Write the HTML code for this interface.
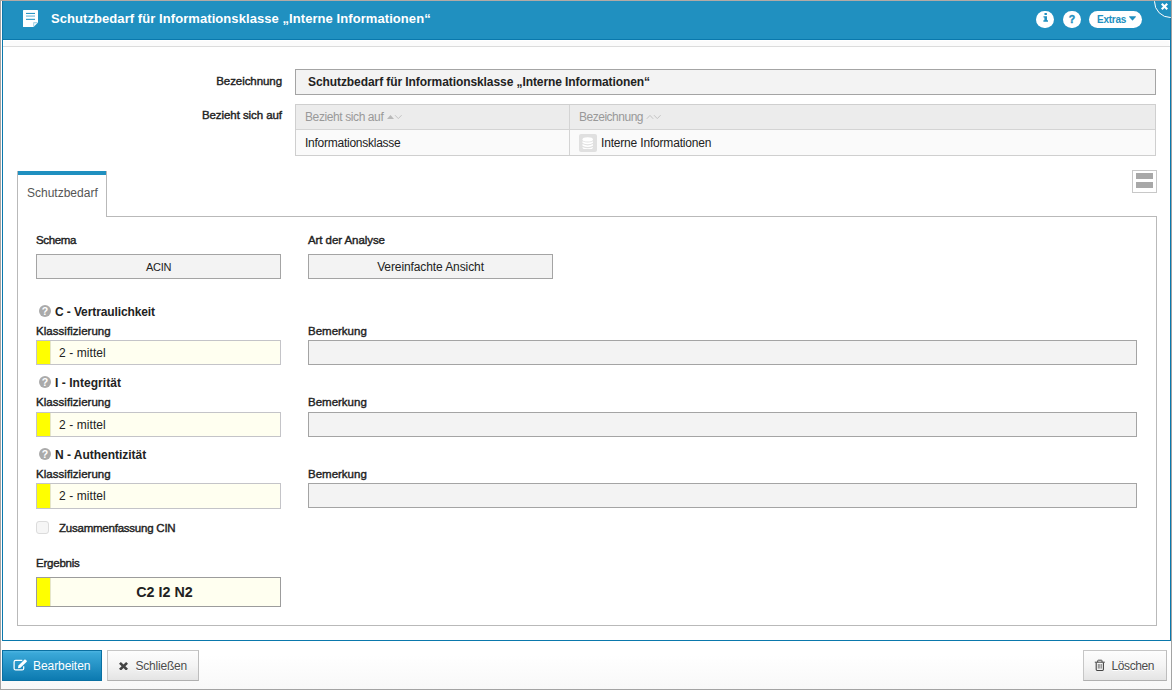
<!DOCTYPE html>
<html lang="de">
<head>
<meta charset="utf-8">
<title>Schutzbedarf</title>
<style>
*{box-sizing:border-box;margin:0;padding:0}
html,body{width:1172px;height:690px;overflow:hidden;background:#fff}
body{position:relative;font-family:"Liberation Sans",sans-serif;font-size:12px;color:#222;line-height:16px}
.abs{position:absolute}
.t{position:absolute;white-space:nowrap;line-height:16px;height:16px}
.sb{font-weight:normal;font-size:11.5px;-webkit-text-stroke:0.4px #222;letter-spacing:-0.07px}
.b{font-weight:bold}
#frame{left:0;top:0;width:1172px;height:690px;border:1px solid #a3a3a3;border-top-color:#b3aaa5}
#dlg{left:2px;top:1px;width:1169px;height:640px;border:1px solid #0a78ac;border-top:none;background:#fff}
#hdr{left:3px;top:1px;width:1167px;height:38px;background:#2090c0}
#hdrline{left:3px;top:39px;width:1167px;height:1px;background:#0a78ac}
#band{left:4px;top:41px;width:1165px;height:5px;background:#fbfbfb}
#bandline{left:3px;top:46px;width:1167px;height:1px;background:#dcdcdc}
#foot{left:1px;top:641px;width:1170px;height:48px;background:linear-gradient(#fff,#fff 30%,#f8f8f8)}
.inp{position:absolute;border:1px solid #a4a4a4;background:#f3f3f3}
.cls{position:absolute;border:1px solid #c4c4c8;background:#fffff0}
.cls i{position:absolute;left:0;top:0;bottom:0;width:13px;background:#ffff00;border-right:1px solid #e6e6c8;box-sizing:content-box}
.btn{position:absolute;top:650px;height:31px;border:1px solid #bdbdbd;border-top-color:#c6c6c6;border-left-color:#c6c6c6;border-bottom-color:#b0b0b0;background:linear-gradient(#fdfdfd,#f4f4f4 50%,#e4e4e4);color:#555}
.q{width:12px;height:12px;border-radius:6px;background:#aaa}
.q svg{position:absolute;left:0;top:0}
</style>
</head>
<body>
<div id="frame" class="abs"></div>
<div id="dlg" class="abs"></div>
<div id="hdr" class="abs"></div>
<div id="hdrline" class="abs"></div>
<div id="band" class="abs"></div>
<div id="bandline" class="abs"></div>
<div id="foot" class="abs"></div>

<!-- header -->
<svg class="abs" style="left:23px;top:10px" width="15" height="17" viewBox="0 0 15 17">
<path d="M0.5 0H14.5Q15 0 15 .5V12.5L10.5 17H.5Q0 17 0 16.5V.5Q0 0 .5 0Z" fill="#fff"/>
<path d="M10.3 12.3H15L10.3 17Z" fill="#8fc7e0"/>
<path d="M11.2 13.2H14L11.2 16Z" fill="#fff"/>
<rect x="3" y="2.9" width="9" height="1.1" fill="#2d97c5"/>
<rect x="3" y="5.5" width="9" height="1.1" fill="#6ab5d8"/>
<rect x="3" y="8.8" width="9" height="1.1" fill="#2d97c5"/>
</svg>
<div class="t b" style="left:51px;top:11px;font-size:13px;color:#fff;letter-spacing:0.07px">Schutzbedarf für Informationsklasse „Interne Informationen“</div>

<div class="abs" style="left:1036px;top:10.6px;width:18px;height:17.4px;border-radius:9px;background:#fff"></div>
<svg class="abs" style="left:1042.8px;top:13px" width="5.4" height="9.4" viewBox="0 0 6 11"><path d="M1.6 0H4.4V2.4H1.6ZM.4 3.8H4.5V8.6H5.7V10.2H.3V8.6H1.5V5.4H.4Z" fill="#2090c0"/></svg>
<div class="abs" style="left:1063px;top:10.6px;width:18px;height:17.4px;border-radius:9px;background:#fff"></div>
<div class="t b" style="left:1063px;top:10.5px;width:18px;text-align:center;font-size:10.5px;color:#2090c0;-webkit-text-stroke:0.4px #2090c0">?</div>
<div class="abs" style="left:1089px;top:10.6px;width:53px;height:17.4px;border-radius:9px;background:#fff"></div>
<div class="t b" style="left:1097px;top:12px;font-size:10px;color:#2090c0;letter-spacing:-0.25px">Extras</div>
<svg class="abs" style="left:1129px;top:16px" width="7" height="5" viewBox="0 0 7 5"><path d="M.4 .3H6.6Q7.1 .5 6.8 1L3.9 4.3Q3.5 4.7 3.1 4.3L.2 1Q-.1 .5 .4 .3Z" fill="#2090c0"/></svg>

<div class="abs" style="left:1150px;top:1px;width:21px;height:22px;overflow:hidden"><div class="abs" style="left:4px;top:-16px;width:33px;height:33px;border-radius:50%;border:1.5px solid #fff;background:#2090c0"></div></div>
<svg class="abs" style="left:1161px;top:3px" width="7" height="7" viewBox="0 0 7 7"><path d="M1.5 0L3.5 2L5.5 0L7 1.5L5 3.5L7 5.5L5.5 7L3.5 5L1.5 7L0 5.5L2 3.5L0 1.5Z" fill="#fff"/></svg>

<!-- top form -->
<div class="t sb" style="left:182px;top:73px;width:100px;text-align:right">Bezeichnung</div>
<div class="inp" style="left:295px;top:69px;width:861px;height:26px"></div>
<div class="t b" style="left:308px;top:74px;letter-spacing:-0.08px">Schutzbedarf für Informationsklasse „Interne Informationen“</div>
<div class="t sb" style="left:182px;top:107px;width:100px;text-align:right">Bezieht sich auf</div>

<div class="abs" style="left:295px;top:104px;width:861px;height:52px;border:1px solid #cfcfcf;background:#fafafa"></div>
<div class="abs" style="left:296px;top:105px;width:859px;height:24px;background:#ececec"></div>
<div class="abs" style="left:296px;top:129px;width:859px;height:1px;background:#d4d4d4"></div>
<div class="abs" style="left:569px;top:105px;width:1px;height:50px;background:#d4d4d4"></div>
<div class="t" style="left:305px;top:109px;color:#999;letter-spacing:-0.4px">Bezieht sich auf</div>
<svg class="abs" style="left:387px;top:114px" width="16" height="6" viewBox="0 0 16 6"><path d="M0 5L3.5 1L7 5Z" fill="#b9b9b9"/><path d="M8 1.2L11.3 4.6L14.6 1.2" fill="none" stroke="#c4c4c4" stroke-width="1"/></svg>
<div class="t" style="left:579px;top:109px;color:#999;letter-spacing:-0.49px">Bezeichnung</div>
<svg class="abs" style="left:646px;top:114px" width="16" height="6" viewBox="0 0 16 6"><path d="M.8 4.8L4 1.4L7.2 4.8" fill="none" stroke="#c4c4c4" stroke-width="1"/><path d="M8 1.2L11.3 4.6L14.6 1.2" fill="none" stroke="#c4c4c4" stroke-width="1"/></svg>
<div class="t" style="left:305px;top:135px;letter-spacing:-0.25px">Informationsklasse</div>
<div class="abs" style="left:579px;top:134px;width:18px;height:18px;border-radius:2px;background:#e0e0e0"></div>
<svg class="abs" style="left:582.2px;top:136.6px" width="11.4" height="12.6" viewBox="0 0 12 14" preserveAspectRatio="none"><g fill="#fff"><ellipse cx="6" cy="2.7" rx="5.5" ry="2.3"/><path d="M.5 4.7Q6 7.6 11.5 4.7V6.6Q6 9.5 .5 6.6Z"/><path d="M.5 7.9Q6 10.8 11.5 7.9V9.8Q6 12.7 .5 9.8Z"/><path d="M.5 11.1Q6 14 11.5 11.1V11.7Q11.5 14 6 14Q.5 14 .5 11.7Z"/></g></svg>
<div class="t" style="left:601px;top:135px;letter-spacing:-0.18px">Interne Informationen</div>

<!-- tab -->
<div class="abs" style="left:17px;top:216px;width:1140px;height:410px;border:1px solid #b9b9b9;background:#fff"></div>
<div class="abs" style="left:17px;top:171px;width:90px;height:46px;border:1px solid #b9b9b9;border-bottom:none;border-top:none;background:#fff"><div style="height:4px;background:#2090c0"></div></div>
<div class="t" style="left:27px;top:185px;color:#555">Schutzbedarf</div>
<div class="abs" style="left:1132px;top:170px;width:25px;height:23px;border:1px solid #c8c8c8;background:#fff"></div>
<div class="abs" style="left:1136px;top:173px;width:17px;height:6px;background:#a8a8a8"></div>
<div class="abs" style="left:1136px;top:182px;width:17px;height:6px;background:#a8a8a8"></div>

<!-- panel content -->
<div class="t sb" style="left:36px;top:232px;letter-spacing:-0.37px">Schema</div>
<div class="inp" style="left:36px;top:254px;width:245px;height:25px"></div>
<div class="t" style="left:36px;top:259px;width:245px;text-align:center;font-size:11px;letter-spacing:-0.3px">ACIN</div>
<div class="t sb" style="left:308px;top:232px">Art der Analyse</div>
<div class="inp" style="left:308px;top:254px;width:245px;height:25px"></div>
<div class="t" style="left:308px;top:259px;width:245px;text-align:center;letter-spacing:-0.1px">Vereinfachte Ansicht</div>

<!-- C -->
<div class="abs q" style="left:39px;top:305px"><svg width="12" height="12" viewBox="0 0 12 12"><text x="6" y="9.7" text-anchor="middle" font-family="Liberation Sans, sans-serif" font-weight="bold" font-size="10.5" fill="#fff">?</text></svg></div>
<div class="t b" style="left:55px;top:304px;letter-spacing:-0.11px">C - Vertraulichkeit</div>
<div class="t sb" style="left:36px;top:323px;letter-spacing:0.04px">Klassifizierung</div>
<div class="cls" style="left:36px;top:340px;width:245px;height:25px"><i></i></div>
<div class="t" style="left:59px;top:345px;letter-spacing:0.08px">2 - mittel</div>
<div class="t sb" style="left:308px;top:323px;letter-spacing:0px">Bemerkung</div>
<div class="inp" style="left:308px;top:340px;width:829px;height:25px"></div>

<!-- I -->
<div class="abs q" style="left:39px;top:376px"><svg width="12" height="12" viewBox="0 0 12 12"><text x="6" y="9.7" text-anchor="middle" font-family="Liberation Sans, sans-serif" font-weight="bold" font-size="10.5" fill="#fff">?</text></svg></div>
<div class="t b" style="left:55px;top:375px;letter-spacing:0.05px">I - Integrität</div>
<div class="t sb" style="left:36px;top:394px;letter-spacing:0.04px">Klassifizierung</div>
<div class="cls" style="left:36px;top:412px;width:245px;height:25px"><i></i></div>
<div class="t" style="left:59px;top:417px;letter-spacing:0.08px">2 - mittel</div>
<div class="t sb" style="left:308px;top:394px;letter-spacing:0px">Bemerkung</div>
<div class="inp" style="left:308px;top:412px;width:829px;height:25px"></div>

<!-- N -->
<div class="abs q" style="left:39px;top:448px"><svg width="12" height="12" viewBox="0 0 12 12"><text x="6" y="9.7" text-anchor="middle" font-family="Liberation Sans, sans-serif" font-weight="bold" font-size="10.5" fill="#fff">?</text></svg></div>
<div class="t b" style="left:55px;top:447px;letter-spacing:-0.02px">N - Authentizität</div>
<div class="t sb" style="left:36px;top:466px;letter-spacing:0.04px">Klassifizierung</div>
<div class="cls" style="left:36px;top:483px;width:245px;height:26px"><i></i></div>
<div class="t" style="left:59px;top:488px;letter-spacing:0.08px">2 - mittel</div>
<div class="t sb" style="left:308px;top:466px;letter-spacing:0px">Bemerkung</div>
<div class="inp" style="left:308px;top:483px;width:829px;height:25px"></div>

<div class="abs" style="left:36px;top:521px;width:13px;height:13px;border:1px solid #dcdcdc;border-radius:3px;background:#f6f6f6"></div>
<div class="t sb" style="left:59px;top:520px;letter-spacing:-0.23px">Zusammenfassung CIN</div>
<div class="t sb" style="left:36px;top:555px;letter-spacing:-0.22px">Ergebnis</div>
<div class="cls" style="left:36px;top:577px;width:245px;height:30px;border-color:#9c9c9c"><i></i></div>
<div class="t b" style="left:49px;top:584px;width:231px;text-align:center;font-size:14.3px">C2 I2 N2</div>

<!-- footer buttons -->
<div class="btn" style="left:2px;width:100px;border-color:#0a70a2;background:linear-gradient(#4db4e2,#3aa8d8 8%,#0c7ab0);color:#fff"></div>
<svg class="abs" style="left:12px;top:658px" width="17" height="14" viewBox="0 0 17 14"><path d="M10.3 2.4H3.6Q2.1 2.4 2.1 3.9V10.4Q2.1 11.9 3.6 11.9H10.2Q11.7 11.9 11.7 10.4V8.3" fill="none" stroke="#fff" stroke-width="1.25"/><path d="M6 9.7L6.5 7.6L12.6 1.6Q13.2 1.2 13.7 1.7L14.7 2.7Q15.1 3.2 14.7 3.7L8.5 9.8L6.3 10.2Z" fill="#fff"/></svg>
<div class="t" style="left:33px;top:658px;color:#fff;letter-spacing:-0.07px">Bearbeiten</div>
<div class="btn" style="left:107px;width:92px"></div>
<svg class="abs" style="left:119.2px;top:661.7px" width="9" height="8.6" viewBox="0 0 9 9" preserveAspectRatio="none"><path d="M1.9 0L4.5 2.6L7.1 0L9 1.9L6.4 4.5L9 7.1L7.1 9L4.5 6.4L1.9 9L0 7.1L2.6 4.5L0 1.9Z" fill="#444"/></svg>
<div class="t" style="left:135.5px;top:658px;color:#4c4c4c;letter-spacing:-0.2px;text-shadow:0 1px 0 #fff">Schließen</div>
<div class="btn" style="left:1083px;width:84px"></div>
<svg class="abs" style="left:1094px;top:659.3px" width="12" height="13" viewBox="0 0 12 13"><path d="M.8 3.2H10.8M3.7 3.2V1.7Q3.7 1.2 4.3 1.2H7.4Q8 1.2 8 1.7V3.2" fill="none" stroke="#444" stroke-width="1"/><path d="M2.2 3.4V10.6Q2.2 11.5 3.1 11.5H8.5Q9.4 11.5 9.4 10.6V3.4" fill="none" stroke="#444" stroke-width="1.1"/><path d="M4.3 5V9.6M5.8 5V9.6M7.3 5V9.6" stroke="#777" stroke-width=".9"/></svg>
<div class="t" style="left:1111.5px;top:658px;color:#4c4c4c;letter-spacing:-0.4px;text-shadow:0 1px 0 #fff">Löschen</div>
</body>
</html>
